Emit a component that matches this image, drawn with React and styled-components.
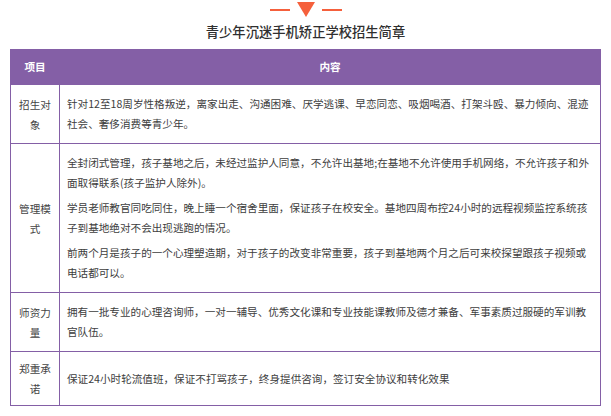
import React from "react";
import styled, { createGlobalStyle } from "styled-components";

const PURPLE = "#845fa6";
const ORANGE = "#f5603c";

const GlobalStyle = createGlobalStyle`
  html, body { margin: 0; padding: 0; background: #fff; }
  body {
    font-family: "Noto Sans CJK SC", "Noto Sans", sans-serif;
    color: #3d3d3d;
  }
`;

const Page = styled.div`
  width: 611px;
  box-sizing: border-box;
  padding: 2px 10px 0;
`;

const Ornament = styled.div`
  display: flex;
  justify-content: center;
  align-items: center;
  gap: 7px;
  height: 15px;
`;

const Dash = styled.span`
  width: 20px;
  height: 2px;
  background: ${ORANGE};
`;

const Triangle = styled.span`
  width: 0;
  height: 0;
  border-left: 9.5px solid transparent;
  border-right: 9.5px solid transparent;
  border-top: 15px solid ${ORANGE};
`;

const Title = styled.h1`
  margin: 5px 0 7px;
  text-align: center;
  font-size: 13.3px;
  line-height: 20px;
  font-weight: 500;
  color: #2f2f2f;
`;

const Table = styled.table`
  width: 591px;
  border-collapse: collapse;
  table-layout: fixed;
  font-size: 10.6px;
  line-height: 20px;
`;

const HeadCell = styled.th`
  background: ${PURPLE};
  color: #fff;
  font-weight: 700;
  height: 34px;
  padding: 0;
  text-align: center;
  border: 1px solid ${PURPLE};
`;

const LabelCell = styled.td`
  border: 1px solid ${PURPLE};
  padding: 7px 6px 6px;
  text-align: center;
  vertical-align: middle;
  color: #444;
`;

const ContentCell = styled.td`
  border: 1px solid ${PURPLE};
  padding: 9px 7px 9px 7px;
  vertical-align: middle;
  color: #3d3d3d;
`;

const Para = styled.p`
  margin: 0 0 5px;
  &:last-child { margin-bottom: 0; }
`;

const rows = [
  {
    label: "招生对象",
    paras: [
      "针对12至18周岁性格叛逆，离家出走、沟通困难、厌学逃课、早恋同恋、吸烟喝酒、打架斗殴、暴力倾向、混迹社会、奢侈消费等青少年。",
    ],
  },
  {
    label: "管理模式",
    paras: [
      "全封闭式管理，孩子基地之后，未经过监护人同意，不允许出基地;在基地不允许使用手机网络，不允许孩子和外面取得联系(孩子监护人除外)。",
      "学员老师教官同吃同住，晚上睡一个宿舍里面，保证孩子在校安全。基地四周布控24小时的远程视频监控系统孩子到基地绝对不会出现逃跑的情况。",
      "前两个月是孩子的一个心理塑造期，对于孩子的改变非常重要，孩子到基地两个月之后可来校探望跟孩子视频或电话都可以。",
    ],
  },
  {
    label: "师资力量",
    paras: [
      "拥有一批专业的心理咨询师，一对一辅导、优秀文化课和专业技能课教师及德才兼备、军事素质过服硬的军训教官队伍。",
    ],
  },
  {
    label: "郑重承诺",
    paras: ["保证24小时轮流值班，保证不打骂孩子，终身提供咨询，签订安全协议和转化效果"],
  },
];

export default function App() {
  return (
    <>
      <GlobalStyle />
      <Page>
        <Ornament>
          <Dash />
          <Triangle />
          <Dash />
        </Ornament>
        <Title>青少年沉迷手机矫正学校招生简章</Title>
        <Table>
          <colgroup>
            <col style={{ width: "49px" }} />
            <col />
          </colgroup>
          <thead>
            <tr>
              <HeadCell>项目</HeadCell>
              <HeadCell>内容</HeadCell>
            </tr>
          </thead>
          <tbody>
            {rows.map((r) => (
              <tr key={r.label}>
                <LabelCell>{r.label}</LabelCell>
                <ContentCell>
                  {r.paras.map((p, i) => (
                    <Para key={i}>{p}</Para>
                  ))}
                </ContentCell>
              </tr>
            ))}
          </tbody>
        </Table>
      </Page>
    </>
  );
}
